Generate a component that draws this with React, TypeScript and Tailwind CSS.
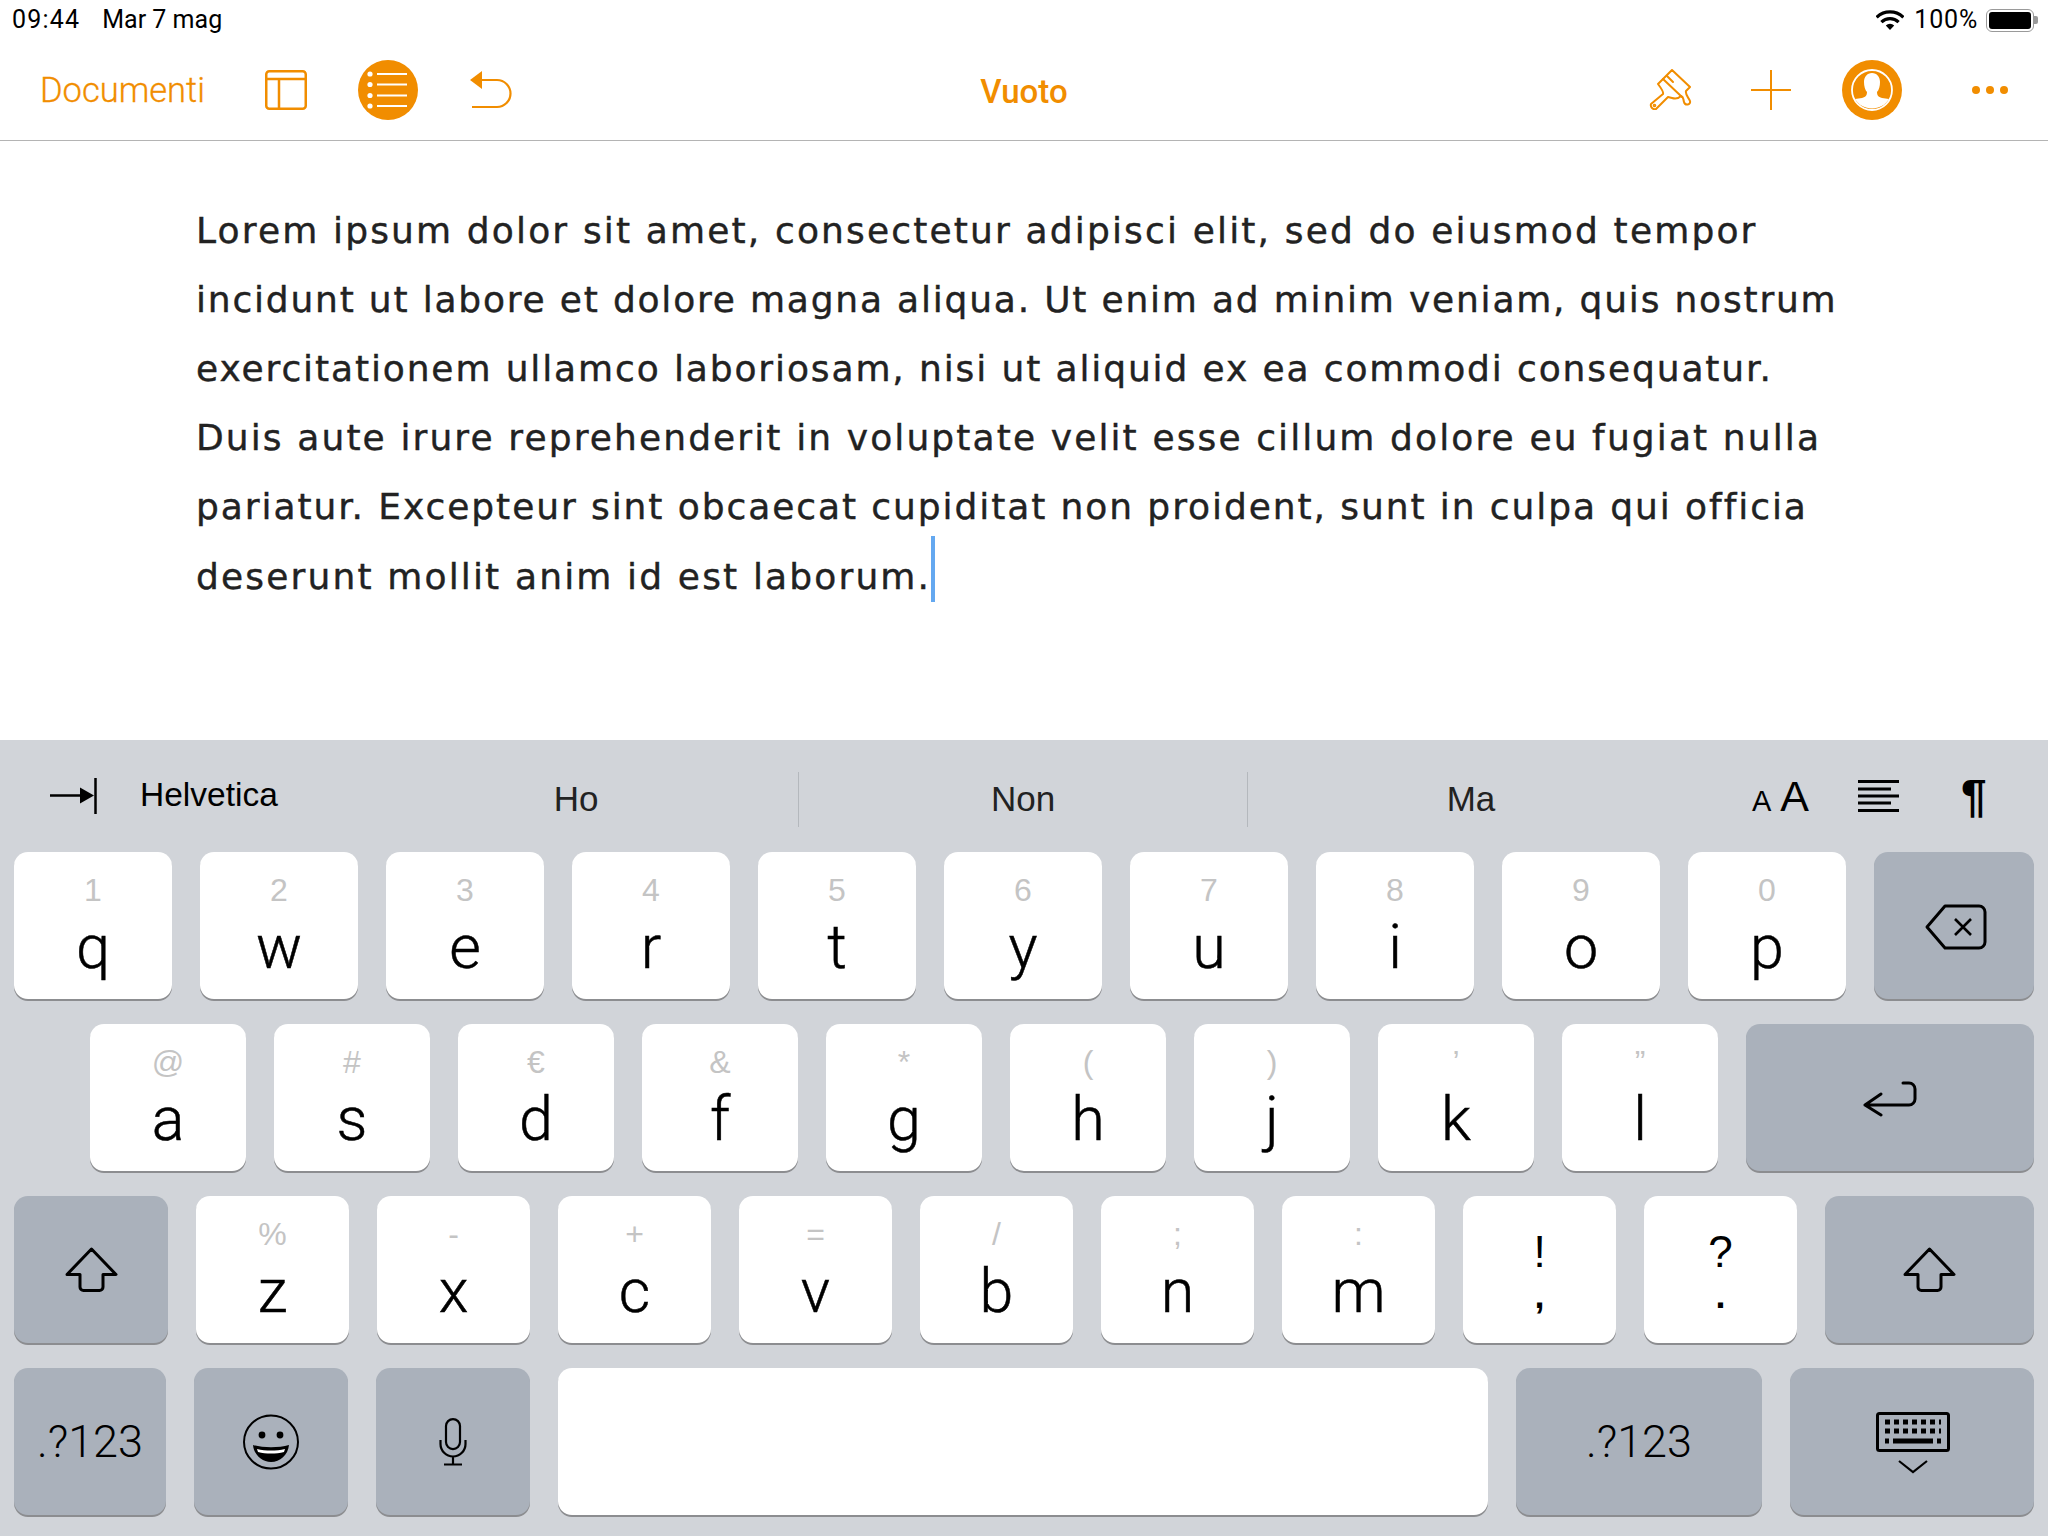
import type { ReactNode } from 'react'

// each line gets its own tracking so the ends land where the reference has them
const lines = [
  { text: 'Lorem ipsum dolor sit amet, consectetur adipisci elit, sed do eiusmod tempor', tracking: 'tracking-[2.15px]' },
  { text: 'incidunt ut labore et dolore magna aliqua. Ut enim ad minim veniam, quis nostrum', tracking: 'tracking-[1.8px]' },
  { text: 'exercitationem ullamco laboriosam, nisi ut aliquid ex ea commodi consequatur.', tracking: 'tracking-[1.88px]' },
  { text: 'Duis aute irure reprehenderit in voluptate velit esse cillum dolore eu fugiat nulla', tracking: 'tracking-[2.11px]' },
  { text: 'pariatur. Excepteur sint obcaecat cupiditat non proident, sunt in culpa qui officia', tracking: 'tracking-[1.92px]' },
]

const row1 = [
  ['1', 'q'], ['2', 'w'], ['3', 'e'], ['4', 'r'], ['5', 't'],
  ['6', 'y'], ['7', 'u'], ['8', 'i'], ['9', 'o'], ['0', 'p'],
]
const row2 = [
  ['@', 'a'], ['#', 's'], ['€', 'd'], ['&', 'f'], ['*', 'g'],
  ['(', 'h'], [')', 'j'], ['’', 'k'], ['”', 'l'],
]
const row3 = [
  ['%', 'z'], ['-', 'x'], ['+', 'c'], ['=', 'v'], ['/', 'b'],
  [';', 'n'], [':', 'm'],
]

function LetterKey({ hint, letter, width }: { hint: string; letter: string; width: string }) {
  return (
    <div className={`${width} flex h-[147px] flex-col items-center rounded-[14px] bg-white pt-[19px] shadow-[0_2px_0_#8c8d90]`}>
      <span className="text-[32px] leading-[38px] text-[#c4c4c4]">{hint}</span>
      <span className="mt-[6px] font-['Roboto',sans-serif] text-[61px] font-light leading-[64px] text-black [-webkit-text-stroke:0.5px_black]">{letter}</span>
    </div>
  )
}

function PunctKey({ top, bottom }: { top: string; bottom: string }) {
  return (
    <div className="flex h-[147px] w-[153px] flex-col items-center rounded-[14px] bg-white pt-[31px] text-black shadow-[0_2px_0_#8c8d90]">
      <span className="text-[44px] leading-[49px]">{top}</span>
      <span className="text-[36px] font-bold leading-[40px]">{bottom}</span>
    </div>
  )
}

function GrayKey({ className, children }: { className: string; children: ReactNode }) {
  return (
    <div className={`${className} flex h-[147px] items-center justify-center rounded-[14px] bg-[#aab1bb] text-black shadow-[0_2px_0_#8c8d90]`}>
      {children}
    </div>
  )
}

function ShiftIcon() {
  return (
    <svg width="53" height="46" viewBox="0 0 53 46" fill="none" stroke="black" strokeWidth="3" strokeLinejoin="round">
      <path d="M26.5 2 L51 27.5 H38 V40 a3.5 3.5 0 0 1 -3.5 3.5 H18.5 a3.5 3.5 0 0 1 -3.5 -3.5 V27.5 H2 Z" />
    </svg>
  )
}

function PersonIcon() {
  return (
    <svg width="60" height="60" viewBox="0 0 60 60">
      <circle cx="30" cy="30" r="30" fill="#f18d00" />
      <circle cx="30" cy="30" r="20" fill="none" stroke="white" strokeWidth="1.8" />
      <path
        d="M30 13 c-5 0 -8 4 -8 9 c0 4 1 8 3 10 c0 3 -1 5 -5 6 l-7 1 A20 20 0 0 0 47 39 l-7 -1 c-4 -1 -5 -3 -5 -6 c2 -2 3 -6 3 -10 c0 -5 -3 -9 -8 -9 Z"
        fill="white"
      />
    </svg>
  )
}

export default function App() {
  const orange = 'text-[#f18d00]'

  return (
    <div className="flex h-[1536px] w-[2048px] flex-col overflow-hidden bg-white font-['Liberation_Sans',sans-serif]">
      {/* Status bar */}
      <div className="flex h-[40px] items-center justify-between pl-[12px] pr-[10px] font-['Roboto',sans-serif] text-[25px] text-black">
        <div className="flex gap-[22px]">
          <span className="tracking-[1.2px]">09:44</span>
          <span>Mar 7 mag</span>
        </div>
        <div className="flex items-center">
          <svg width="28" height="20" viewBox="0 0 28 20" fill="none">
            <path d="M14 20 L9.8 15.5 A6 6 0 0 1 18.2 15.5 Z" fill="black" />
            <path d="M5.4 12.2 A12.2 12.2 0 0 1 22.6 12.2" stroke="black" strokeWidth="3.2" />
            <path d="M0.6 7.4 A19 19 0 0 1 27.4 7.4" stroke="black" strokeWidth="3.2" />
          </svg>
          <span className="ml-[10px] tracking-[0.8px]">100%</span>
          <div className="ml-[8px] flex items-center">
            <div className="h-[23px] w-[48px] rounded-[6px] border-[1.5px] border-[#9a9a9a] p-[2px]">
              <div className="h-full w-full rounded-[3px] bg-black" />
            </div>
            <div className="h-[8px] w-[4px] rounded-r-[2px] bg-[#9a9a9a]" />
          </div>
        </div>
      </div>

      {/* Toolbar */}
      <div className="relative flex h-[101px] items-center justify-between border-b border-[#b4b4b4] pb-[1px] pl-[40px] pr-[40px]">
        <div className={`flex items-center ${orange}`}>
          <span className="mt-[2px] w-[166px] font-['Roboto',sans-serif] text-[34.5px] font-light [-webkit-text-stroke:0.3px_#f18d00]">Documenti</span>
          <svg className="ml-[59px]" width="42" height="40" viewBox="0 0 42 40" fill="none" stroke="#f18d00" strokeWidth="2.5">
            <rect x="1.25" y="1.25" width="39.5" height="37.5" rx="3" />
            <path d="M1 9 H41 M14 9 V39" />
          </svg>
          <svg className="ml-[51px]" width="60" height="60" viewBox="0 0 60 60">
            <circle cx="30" cy="30" r="30" fill="#f18d00" />
            <g fill="white">
              <circle cx="12" cy="14" r="2.6" />
              <circle cx="12" cy="24.5" r="2.6" />
              <circle cx="12" cy="35.5" r="2.6" />
              <circle cx="12" cy="46" r="2.6" />
            </g>
            <path d="M19 14 H49 M19 24.5 H49 M19 35.5 H49 M19 46 H49" stroke="white" strokeWidth="2" />
          </svg>
          <svg className="ml-[52px]" width="42" height="38" viewBox="0 0 42 38" fill="none">
            <path d="M0 9 L12 0 V18 Z" fill="#f18d00" />
            <path d="M12 9 H27 a13.5 13.5 0 0 1 0 27 H2" stroke="#f18d00" strokeWidth="2.2" />
          </svg>
        </div>

        <span className={`absolute left-1/2 top-[27px] -translate-x-1/2 font-['Roboto',sans-serif] text-[33px] font-medium ${orange}`}>Vuoto</span>

        <div className="flex items-center">
          <svg width="43" height="41" viewBox="0 0 43 41" fill="none" stroke="#f18d00" strokeWidth="2" strokeLinejoin="round" strokeLinecap="round">
            <path d="M23 1 L41 18 L37 22 C36 26 40 29 41 32 C42 36 36 37 35 33 C34 30 35 28 32 27 C29 30 26 30 23 29 L19 28 L7 40 C4 41 1 38 2 35 L14 25 C15 23 12 19 9 15 Z" />
            <path d="M14 10 L33 28 M18 7 L24 13" />
            <circle cx="5.5" cy="36.5" r="0.8" />
          </svg>
          <svg className="ml-[59px]" width="40" height="40" viewBox="0 0 40 40" stroke="#f18d00" strokeWidth="2">
            <path d="M20 0 V40 M0 20 H40" />
          </svg>
          <div className="ml-[51px]">
            <PersonIcon />
          </div>
          <svg className="ml-[70px]" width="36" height="8" viewBox="0 0 36 8" fill="#f18d00">
            <circle cx="4" cy="4" r="4" />
            <circle cx="18" cy="4" r="4" />
            <circle cx="32" cy="4" r="4" />
          </svg>
        </div>
      </div>

      {/* Document */}
      <div className="flex-1 pl-[196px] pt-[55px] font-['DejaVu_Sans',sans-serif] text-[36px] leading-[69px] text-[#222] [-webkit-text-stroke:0.4px_#222]">
        {lines.map((line) => (
          <div key={line.text} className={`${line.tracking} whitespace-nowrap`}>{line.text}</div>
        ))}
        <div className="mt-[1px] flex items-start whitespace-nowrap tracking-[2.15px]">
          <span>deserunt mollit anim id est laborum.</span>
          <span className="mt-[-6px] h-[66px] w-[4px] bg-[#64a8f0]" />
        </div>
      </div>

      {/* Keyboard */}
      <div className="flex h-[796px] flex-col bg-[#d1d4d9]">
        <div className="flex h-[112px] items-center">
          <svg className="ml-[50px]" width="47" height="36" viewBox="0 0 47 36">
            <path d="M0 17.5 H32 M45.5 0 V36" stroke="black" strokeWidth="2.5" fill="none" />
            <path d="M30 9.5 L44 17.5 L30 25.5 Z" fill="black" />
          </svg>
          <span className="ml-[43px] mt-[-2px] w-[214px] text-[33.5px] text-black">Helvetica</span>
          <div className="mt-[6px] flex items-center text-[35px] text-[#222]">
            <span className="w-[444px] text-center">Ho</span>
            <span className="h-[55px] w-px bg-[#b4b8bd]" />
            <span className="w-[448px] text-center">Non</span>
            <span className="h-[55px] w-px bg-[#b4b8bd]" />
            <span className="w-[446px] text-center">Ma</span>
          </div>
          <div className="ml-[58px] flex items-baseline text-black">
            <span className="text-[29px]">A</span>
            <span className="ml-[9px] text-[43px]">A</span>
          </div>
          <svg className="ml-[49px]" width="41" height="32" viewBox="0 0 41 32" stroke="black" strokeWidth="3">
            <path d="M0 1.5 H41 M0 9 H33 M0 16 H41 M0 23 H33 M0 30.5 H41" />
          </svg>
          <span className="ml-[62px] text-[46px] font-bold leading-none text-black">¶</span>
        </div>

        <div className="flex flex-col gap-[25px] px-[14px]">
          <div className="flex gap-[28px]">
            {row1.map(([hint, letter]) => (
              <LetterKey key={letter} hint={hint} letter={letter} width="w-[158px]" />
            ))}
            <GrayKey className="flex-1">
              <svg className="ml-[4px] mt-[2px]" width="62" height="46" viewBox="0 0 62 46" fill="none" stroke="black" strokeWidth="3" strokeLinejoin="round">
                <path d="M20 2 H54 a6 6 0 0 1 6 6 V38 a6 6 0 0 1 -6 6 H20 L2 23 Z" />
                <path d="M30 15 L46 31 M46 15 L30 31" strokeWidth="2.6" />
              </svg>
            </GrayKey>
          </div>

          <div className="flex gap-[28px] pl-[76px]">
            {row2.map(([hint, letter]) => (
              <LetterKey key={letter} hint={hint} letter={letter} width="w-[156px]" />
            ))}
            <GrayKey className="flex-1">
              <svg className="mt-[2px]" width="54" height="36" viewBox="0 0 54 36" fill="none" stroke="black" strokeWidth="3" strokeLinecap="round" strokeLinejoin="round">
                <path d="M18 13 L2 24 L18 34 M2 24 H46 a6 6 0 0 0 6 -6 V8 a6 6 0 0 0 -6 -6 H40" />
              </svg>
            </GrayKey>
          </div>

          <div className="flex gap-[28px]">
            <GrayKey className="w-[154px]">
              <ShiftIcon />
            </GrayKey>
            {row3.map(([hint, letter]) => (
              <LetterKey key={letter} hint={hint} letter={letter} width="w-[153px]" />
            ))}
            <PunctKey top="!" bottom="," />
            <PunctKey top="?" bottom="." />
            <GrayKey className="flex-1">
              <ShiftIcon />
            </GrayKey>
          </div>

          <div className="flex gap-[28px]">
            <GrayKey className="w-[152px] font-['Roboto',sans-serif] text-[45px] font-light">.?123</GrayKey>
            <GrayKey className="w-[154px]">
              <svg width="56" height="56" viewBox="0 0 56 56" fill="none">
                <ellipse cx="28" cy="28" rx="27" ry="26.5" stroke="black" strokeWidth="2" />
                <circle cx="19" cy="21" r="3.4" fill="black" />
                <circle cx="37" cy="21" r="3.4" fill="black" />
                <path d="M10 31 C20 34 36 34 46 31 C45 41 37 48 28 48 C19 48 11 41 10 31 Z" fill="black" />
                <path d="M14 35 C23 37 33 37 42 35 L41 38 C33 40 23 40 15 38 Z" fill="white" />
              </svg>
            </GrayKey>
            <GrayKey className="w-[154px]">
              <svg width="28" height="48" viewBox="0 0 28 48" fill="none" stroke="black" strokeWidth="2.2">
                <rect x="7" y="1.1" width="14" height="30" rx="7" />
                <path d="M1.5 22 V26 a12.5 12.5 0 0 0 25 0 V22 M14 38.5 V46 M5 46.5 H23" />
              </svg>
            </GrayKey>
            <div className="h-[147px] w-[930px] rounded-[14px] bg-white shadow-[0_2px_0_#8c8d90]" />
            <GrayKey className="w-[246px] font-['Roboto',sans-serif] text-[45px] font-light">.?123</GrayKey>
            <GrayKey className="flex-1">
              <svg className="ml-[2px] mt-[3px]" width="74" height="62" viewBox="0 0 74 62" fill="none">
                <rect x="1.5" y="1.5" width="71" height="37" rx="2" stroke="black" strokeWidth="3" />
                <path d="M9 10 H65 M9 19 H65" stroke="black" strokeWidth="5" strokeDasharray="5 4" />
                <path d="M9 29 H13 M17 29 H57 M61 29 H65" stroke="black" strokeWidth="5" />
                <path d="M23 49 L37 60 L51 49" stroke="black" strokeWidth="2.2" />
              </svg>
            </GrayKey>
          </div>
        </div>
      </div>
    </div>
  )
}
